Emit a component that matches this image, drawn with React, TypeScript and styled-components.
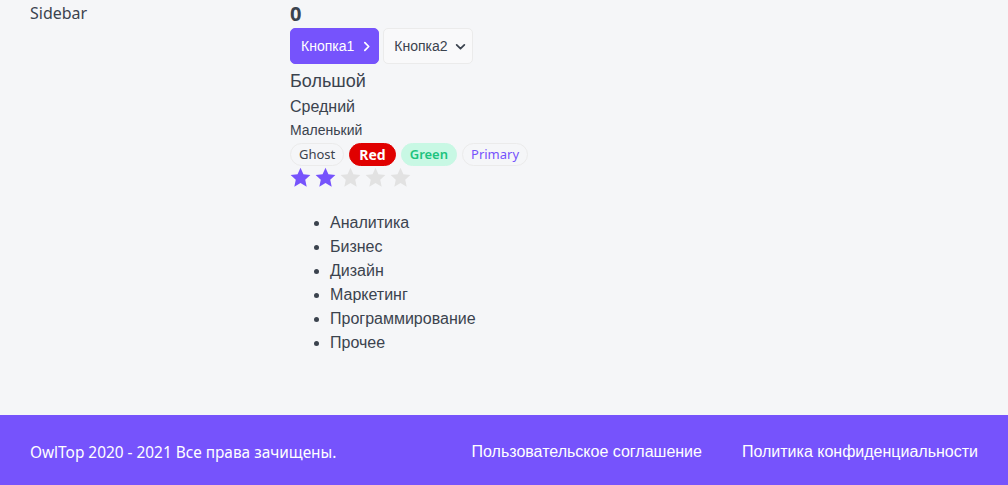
import React from 'react'
import styled, { createGlobalStyle } from 'styled-components'

const GlobalStyle = createGlobalStyle`
    * { box-sizing: border-box; }
    body {
        margin: 0;
        background: #F5F6F8;
        color: #3B434E;
        font-family: 'Noto Sans', sans-serif;
    }
`

const Wrapper = styled.div`
    display: grid;
    min-height: 100vh;
    grid-template-columns: auto 230px minmax(320px, 1200px) auto;
    grid-template-rows: auto 1fr auto;
    column-gap: 30px;
    grid-template-areas:
        '. header header .'
        '. sidebar body .'
        'footer footer footer footer';
`

const Sidebar = styled.div`
    grid-area: sidebar;
    font-size: 16px;
    line-height: 24px;
    padding-top: 1px;
`

const Body = styled.div`
    grid-area: body;
`

const Counter = styled.div`
    font-size: 20px;
    font-weight: 700;
    line-height: 28px;
`

const ButtonRow = styled.div`
    display: flex;
    gap: 4px;
`

const Button = styled.button<{ $appearance: 'primary' | 'ghost' }>`
    display: inline-flex;
    align-items: center;
    gap: 7px;
    height: 36px;
    padding: 0 6px 0 10px;
    border-radius: 5px;
    font-family: 'Liberation Sans', Arial, sans-serif;
    font-size: 14px;
    cursor: pointer;
    border: 1px solid ${p => p.$appearance === 'primary' ? '#7653FC' : '#EBEBEB'};
    background: ${p => p.$appearance === 'primary' ? '#7653FC' : '#F9F9FA'};
    color: ${p => p.$appearance === 'primary' ? '#fff' : '#3B434E'};
`

const Heading = styled.div<{ $size: 'l' | 'm' | 's' }>`
    font-family: 'Liberation Sans', Arial, sans-serif;
    font-size: ${p => p.$size === 'l' ? '18px' : p.$size === 'm' ? '16px' : '14px'};
    line-height: ${p => p.$size === 'l' ? '26px' : p.$size === 'm' ? '24px' : '22px'};
    margin-top: ${p => p.$size === 'l' ? '4px' : p.$size === 'm' ? '1px' : '0'};
`

const TagRow = styled.div`
    display: flex;
    gap: 5px;
    margin-top: 2px;
`

type TagColor = 'ghost' | 'red' | 'green' | 'primary'

const tagStyles: Record<TagColor, { bg: string; border: string; color: string; weight: number; size: number; pad: number }> = {
    ghost: { bg: 'transparent', border: '#EBEBEB', color: '#3B434E', weight: 400, size: 13, pad: 8 },
    red: { bg: '#E00000', border: '#E00000', color: '#fff', weight: 700, size: 14, pad: 9 },
    green: { bg: '#C8F8E4', border: '#C8F8E4', color: '#1DC37E', weight: 600, size: 13, pad: 8 },
    primary: { bg: 'transparent', border: '#EBEBEB', color: '#7653FC', weight: 400, size: 13, pad: 8 },
}

const Tag = styled.span<{ $color: TagColor }>`
    display: inline-block;
    height: 23px;
    padding: 0 ${p => tagStyles[p.$color].pad}px;
    border-radius: 20px;
    font-size: ${p => tagStyles[p.$color].size}px;
    line-height: 21px;
    border: 1px solid ${p => tagStyles[p.$color].border};
    background: ${p => tagStyles[p.$color].bg};
    color: ${p => tagStyles[p.$color].color};
    font-weight: ${p => tagStyles[p.$color].weight};
`

const Stars = styled.div`
    display: flex;
    gap: 4px;
    margin-top: 1px;
`

const StarIcon = styled.svg<{ $filled: boolean }>`
    width: 21px;
    height: 21px;
    fill: ${p => p.$filled ? '#7653FC' : '#E2E2E2'};
`

const List = styled.ul`
    margin: 23px 0 0;
    padding-left: 40px;
    font-family: 'Liberation Sans', Arial, sans-serif;
    font-size: 16px;
    line-height: 24px;
`

const Footer = styled.footer`
    grid-area: footer;
    display: grid;
    grid-template-columns: 1fr auto auto;
    column-gap: 40px;
    align-items: center;
    height: 70px;
    padding: 4px 30px 0;
    background: #7653FC;
    color: #fff;
`

const Copyright = styled.div`
    font-size: 15.4px;
`

const FooterLink = styled.a`
    font-family: 'Liberation Sans', Arial, sans-serif;
    font-size: 16px;
    color: #fff;
    text-decoration: none;
`

const Star = ({ filled }: { filled: boolean }) => (
    <StarIcon $filled={filled} viewBox="0 0 20 20">
        <path d="M10 0.8l2.8 6.1 6.6 0.7-4.9 4.5 1.4 6.6L10 15.3l-5.9 3.4 1.4-6.6L0.6 7.6l6.6-0.7z" />
    </StarIcon>
)

const Chevron = ({ dir }: { dir: 'right' | 'down' }) => (
    <svg width="11" height="11" viewBox="0 0 10 10" fill="none" stroke="currentColor" strokeWidth="1.6" strokeLinecap="round" strokeLinejoin="round">
        {dir === 'right' ? <path d="M3.5 1.5L7 5l-3.5 3.5" /> : <path d="M1.5 3.5L5 7l3.5-3.5" />}
    </svg>
)

const categories = ['Аналитика', 'Бизнес', 'Дизайн', 'Маркетинг', 'Программирование', 'Прочее']

export default function App() {
    const rating = 2
    return (
        <>
            <GlobalStyle />
            <Wrapper>
                <Sidebar>Sidebar</Sidebar>
                <Body>
                    <Counter>0</Counter>
                    <ButtonRow>
                        <Button $appearance="primary">Кнопка1 <Chevron dir="right" /></Button>
                        <Button $appearance="ghost">Кнопка2 <Chevron dir="down" /></Button>
                    </ButtonRow>
                    <Heading $size="l">Большой</Heading>
                    <Heading $size="m">Средний</Heading>
                    <Heading $size="s">Маленький</Heading>
                    <TagRow>
                        <Tag $color="ghost">Ghost</Tag>
                        <Tag $color="red">Red</Tag>
                        <Tag $color="green">Green</Tag>
                        <Tag $color="primary">Primary</Tag>
                    </TagRow>
                    <Stars>
                        {[1, 2, 3, 4, 5].map(i => <Star key={i} filled={i <= rating} />)}
                    </Stars>
                    <List>
                        {categories.map(c => <li key={c}>{c}</li>)}
                    </List>
                </Body>
                <Footer>
                    <Copyright>OwlTop 2020 - 2021 Все права зачищены.</Copyright>
                    <FooterLink href="#">Пользовательское соглашение</FooterLink>
                    <FooterLink href="#">Политика конфиденциальности</FooterLink>
                </Footer>
            </Wrapper>
        </>
    )
}
